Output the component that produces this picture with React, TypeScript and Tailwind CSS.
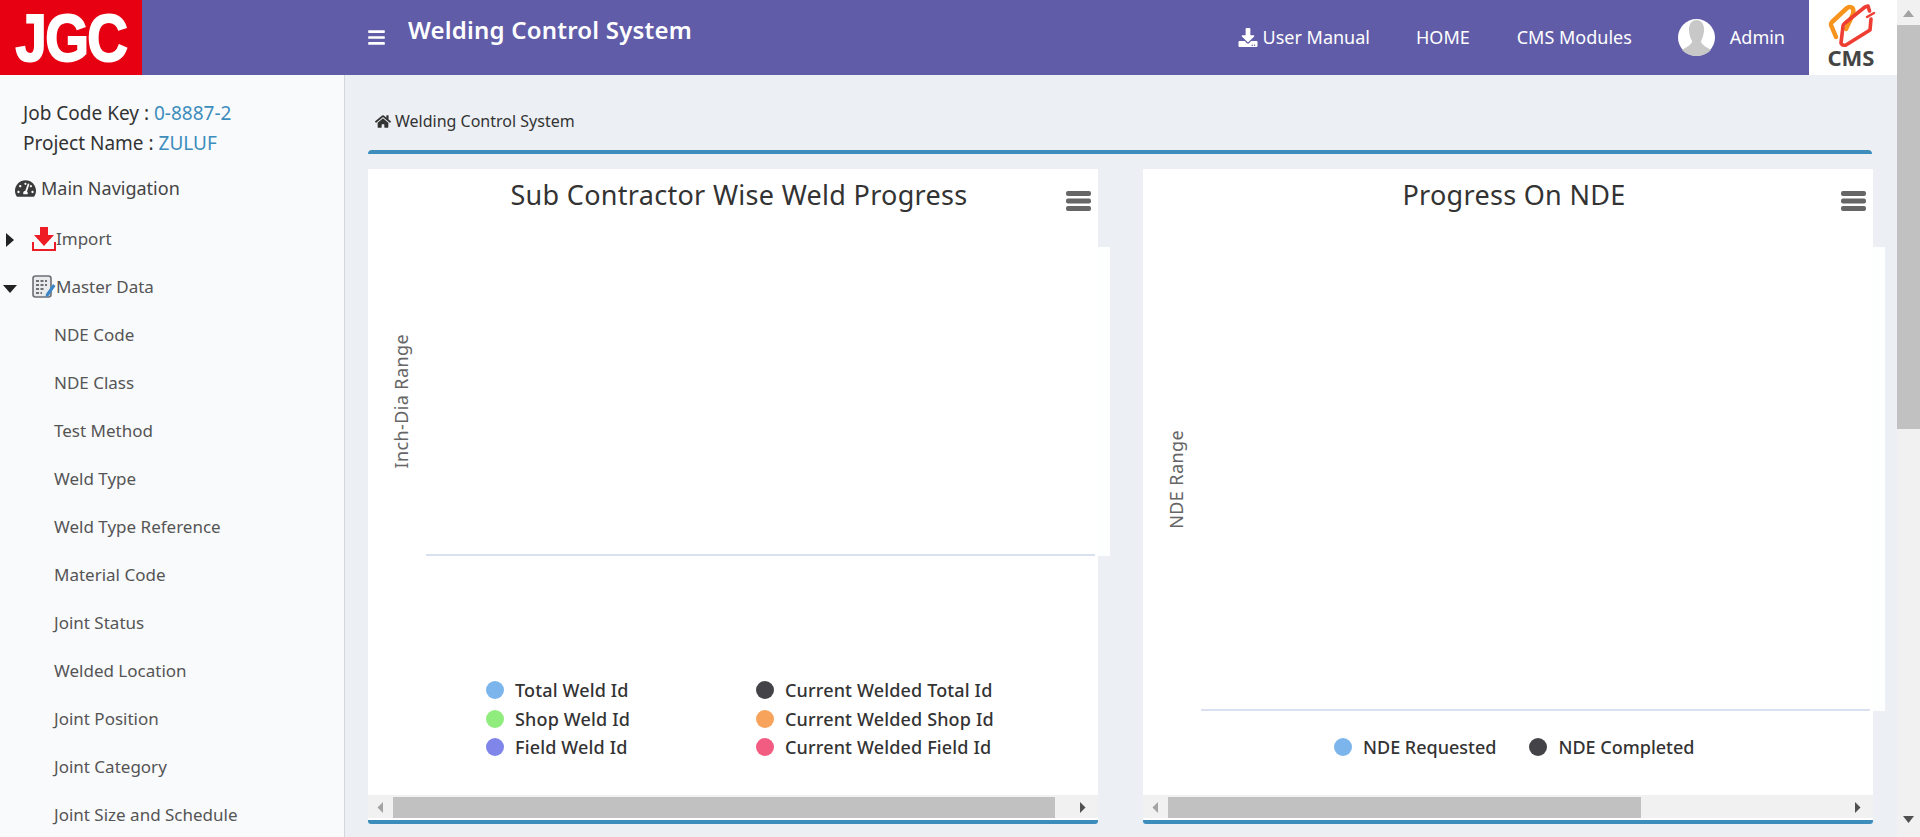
import { FaBars, FaDownload, FaHome, FaTachometerAlt } from 'react-icons/fa'

const masterItems = [
  'NDE Code',
  'NDE Class',
  'Test Method',
  'Weld Type',
  'Weld Type Reference',
  'Material Code',
  'Joint Status',
  'Welded Location',
  'Joint Position',
  'Joint Category',
  'Joint Size and Schedule',
]

function CmsLogo() {
  return (
    <svg width="60" height="48" viewBox="2 0 60 48" fill="none" strokeLinejoin="round" strokeLinecap="round">
      <path d="M15 37 L10 25 Q9.5 23.5 11 22 L26 8 Q29 6 31.5 8 Q33 10 32 14 L25 29" stroke="#f7941d" strokeWidth="4.5" />
      <path d="M20 43 L22 26 Q22.5 24 24 23 L44 7 L47 6 L48.5 11 M50 19 L49 30 L25 45 Q21 46 20 43" stroke="#ee3d32" strokeWidth="3.6" />
      <path d="M46 17 L53 13" stroke="#ee3d32" strokeWidth="2.5" />
    </svg>
  )
}

function Avatar() {
  return (
    <svg width="37" height="37" viewBox="0 0 37 37" className="shrink-0">
      <circle cx="18.5" cy="18.5" r="18.5" fill="#fff" />
      <path
        d="M18.5 1 C13 1 10.5 6 11 12 C11.5 17 13 20 14 22 C14 26 8 28 4 31 C8 35 13 37 18.5 37 C24 37 29 35 33 31 C29 28 23 26 23 22 C24 20 25.5 17 26 12 C26.5 6 24 1 18.5 1 Z"
        fill="#c8c8c8"
      />
    </svg>
  )
}

function ImportIcon() {
  return (
    <svg width="24" height="25" viewBox="0 0 24 25" className="shrink-0">
      <path d="M8 0 H16 V8 H22 L12 19 L2 8 H8 Z" fill="#ee1c25" />
      <path d="M1 15 V23 H23 V15" fill="none" stroke="#ee1c25" strokeWidth="2" />
    </svg>
  )
}

function MasterIcon() {
  return (
    <svg width="24" height="24" viewBox="0 0 24 24" className="shrink-0">
      <rect x="1" y="1" width="18" height="21" rx="2.5" fill="#e8eaec" stroke="#6b7075" strokeWidth="1.6" />
      <path d="M4 6 H15 M4 10 H15 M4 14 H12 M4 18 H10" stroke="#6b7075" strokeWidth="2" strokeDasharray="3 1.5" />
      <path d="M14 19 L21 9 L23.5 11 L16.5 21 L13.5 22 Z" fill="#3c85c6" />
    </svg>
  )
}

function Header() {
  return (
    <header className="flex h-[75px] shrink-0 bg-[#605ca8] text-white">
      <div className="flex h-full w-[142px] shrink-0 items-center justify-center overflow-hidden bg-[#e60012]">
        <span className="origin-center scale-x-[0.84] font-['Liberation_Sans',sans-serif] text-[67px] leading-none font-bold tracking-[-2px] [-webkit-text-stroke:2px_white]">
          JGC
        </span>
      </div>
      <div className="flex flex-1 items-center pl-[225px]">
        <FaBars className="h-[19px] w-[19px]" />
        <span className="mb-[16px] ml-[22px] text-[24px] font-semibold tracking-[0.2px]">Welding Control System</span>
        <nav className="mr-[24px] ml-auto flex items-center text-[18px]">
          <FaDownload className="h-[19px] w-[20px]" />
          <span className="ml-[5px]">User Manual</span>
          <span className="ml-[46px]">HOME</span>
          <span className="ml-[47px]">CMS Modules</span>
          <span className="ml-[46px]"><Avatar /></span>
          <span className="ml-[15px]">Admin</span>
        </nav>
      </div>
      <div className="flex w-[88px] shrink-0 flex-col items-center bg-white">
        <CmsLogo />
        <span className="-mt-[2px] mr-[4px] text-[22px] leading-[22px] font-bold text-[#444]">CMS</span>
      </div>
    </header>
  )
}

function Sidebar() {
  return (
    <aside className="w-[345px] shrink-0 overflow-hidden border-r border-[#d2d6de] bg-[#f9fafc] text-[#444]">
      <div className="pt-[23px] pl-[23px] text-[19px] leading-[30px] text-[#333]">
        <div>Job Code Key : <span className="text-[#3c8dbc]">0-8887-2</span></div>
        <div>Project Name : <span className="text-[#3c8dbc]">ZULUF</span></div>
      </div>
      <div className="mt-[15px] flex h-[30px] items-center pl-[15px] text-[18px]">
        <FaTachometerAlt className="h-[21px] w-[21px] text-[#3b3b3b]" />
        <span className="ml-[5px]">Main Navigation</span>
      </div>
      <div className="text-[17px] text-[#555]">
        <div className="mt-[12px] flex h-[48px] items-center">
          <svg width="8" height="14" viewBox="0 0 8 14" className="mt-[1px] ml-[6px] text-[#222]">
            <path d="M0 0 L8 7 L0 14 Z" fill="currentColor" />
          </svg>
          <span className="ml-[18px]"><ImportIcon /></span>
          <span>Import</span>
        </div>
        <div className="flex h-[48px] items-center">
          <svg width="14" height="8" viewBox="0 0 14 8" className="mt-[3px] ml-[3px] text-[#222]">
            <path d="M0 0 H14 L7 8 Z" fill="currentColor" />
          </svg>
          <span className="ml-[15px]"><MasterIcon /></span>
          <span>Master Data</span>
        </div>
        {masterItems.map((item) => (
          <div key={item} className="flex h-[48px] items-center pl-[54px]">{item}</div>
        ))}
      </div>
    </aside>
  )
}

function HScroll({ thumb }: { thumb: string }) {
  return (
    <div className="flex h-[23px] w-[730px] shrink-0 bg-[#f1f1f1] pt-[2px]">
      <svg width="25" height="21" viewBox="0 0 25 21" className="shrink-0 text-[#a3a3a3]">
        <path d="M15 5 V16 L9.5 10.5 Z" fill="currentColor" />
      </svg>
      <div className={`h-[21px] bg-[#c1c1c1] ${thumb}`} />
      <svg width="10" height="21" viewBox="0 0 10 21" className="mr-[10px] ml-auto shrink-0 text-[#505050]">
        <path d="M2 5 V16 L7.5 10.5 Z" fill="currentColor" />
      </svg>
    </div>
  )
}

function Dot({ color }: { color: string }) {
  return <span className={`block h-[18px] w-[18px] shrink-0 rounded-full ${color}`} />
}

const legendLeft = [
  ['Total Weld Id', 'bg-[#7cb5ec]'],
  ['Shop Weld Id', 'bg-[#90ed7d]'],
  ['Field Weld Id', 'bg-[#8085e9]'],
]

const legendRight = [
  ['Current Welded Total Id', 'bg-[#434348]'],
  ['Current Welded Shop Id', 'bg-[#f7a35c]'],
  ['Current Welded Field Id', 'bg-[#f15c80]'],
]

function LegendColumn({ items, width }: { items: string[][]; width: string }) {
  return (
    <div className={`flex flex-col gap-[10.5px] ${width}`}>
      {items.map(([label, color]) => (
        <div key={label} className="flex h-[18px] items-center">
          <Dot color={color} />
          <span className="ml-[11px] text-[18px] leading-none font-medium tracking-[0.15px] whitespace-nowrap text-[#333]">{label}</span>
        </div>
      ))}
    </div>
  )
}

function ChartPanel({
  title,
  axis,
  plotHeight,
  thumb,
  lineGap,
  children,
}: {
  title: string
  axis: string
  plotHeight: string
  thumb: string
  lineGap: string
  children: React.ReactNode
}) {
  return (
    <section className="relative flex h-[651px] w-[730px] flex-col bg-white">
      <div className="h-[78px] w-[742px] shrink-0 pt-[7px] text-center text-[27px] leading-[38px] tracking-[0.3px] text-[#333]">{title}</div>
      <svg width="25" height="20" viewBox="0 0 25 20" className="absolute top-[22px] right-[7px]">
        <rect width="25" height="5" rx="2" y="0" fill="#666" />
        <rect width="25" height="5" rx="2" y="7.5" fill="#666" />
        <rect width="25" height="5" rx="2" y="15" fill="#666" />
      </svg>
      <div className={`flex w-[742px] shrink-0 items-center bg-white/90 ${plotHeight}`}>
        <span className="ml-[23px] w-[20px] rotate-180 text-center text-[18px] leading-[20px] tracking-[0.4px] whitespace-nowrap text-[#666] [writing-mode:vertical-rl]">{axis}</span>
        <div className={`mt-auto h-[2px] w-[669px] bg-[#d9e0ef] ${lineGap}`} />
      </div>
      <div className="flex-1">{children}</div>
      <HScroll thumb={thumb} />
      <div className="h-[2px] shrink-0 bg-white" />
    </section>
  )
}

export default function App() {
  return (
    <div className="flex h-[837px] w-[1920px] overflow-hidden bg-[#ecf0f5] font-['Noto_Sans',sans-serif]">
      <div className="flex w-[1897px] flex-col">
        <Header />
        <div className="flex flex-1 overflow-hidden">
          <Sidebar />
          <main className="flex-1 pl-[23px]">
            <div className="flex h-[75px] items-center pt-[17px] pl-[7px] text-[16px] text-[#333]">
              <FaHome className="h-[15px] w-[16px] text-[#333]" />
              <span className="ml-[4px]">Welding Control System</span>
            </div>
            <div className="h-[4px] w-[1504px] rounded-t-[4px] bg-[#3c8dbc]" />
            <div className="mt-[15px] flex w-[1505px] gap-[45px]">
              <div>
                <ChartPanel title="Sub Contractor Wise Weld Progress" axis="Inch-Dia Range" plotHeight="h-[309px]" thumb="w-[662px]" lineGap="ml-[15px]">
                  <div className="flex pt-[125px] pl-[118px]">
                    <LegendColumn items={legendLeft} width="w-[270px]" />
                    <LegendColumn items={legendRight} width="w-[250px]" />
                  </div>
                </ChartPanel>
                <div className="h-[4px] rounded-b-[3px] bg-[#3c8dbc]" />
              </div>
              <div>
                <ChartPanel title="Progress On NDE" axis="NDE Range" plotHeight="h-[464px]" thumb="w-[473px]" lineGap="ml-[15px]">
                  <div className="flex items-center pt-[27px] pl-[191px]">
                    <Dot color="bg-[#7cb5ec]" />
                    <span className="ml-[11px] text-[18px] leading-[18px] font-medium text-[#333]">NDE Requested</span>
                    <span className="ml-[33px]"><Dot color="bg-[#434348]" /></span>
                    <span className="ml-[11px] text-[18px] leading-[18px] font-medium text-[#333]">NDE Completed</span>
                  </div>
                </ChartPanel>
                <div className="h-[4px] rounded-b-[3px] bg-[#3c8dbc]" />
              </div>
            </div>
          </main>
        </div>
      </div>
      <div className="flex w-[23px] shrink-0 flex-col items-center bg-[#f1f1f1]">
        <svg width="23" height="25" viewBox="0 0 23 25" className="text-[#a3a3a3]">
          <path d="M6 17 L11.5 10 L17 17 Z" fill="currentColor" />
        </svg>
        <div className="h-[404px] w-[23px] bg-[#c1c1c1]" />
        <svg width="23" height="25" viewBox="0 0 23 25" className="mt-auto mb-[2px] text-[#505050]">
          <path d="M6 6 L17 6 L11.5 13 Z" fill="currentColor" />
        </svg>
      </div>
    </div>
  )
}
